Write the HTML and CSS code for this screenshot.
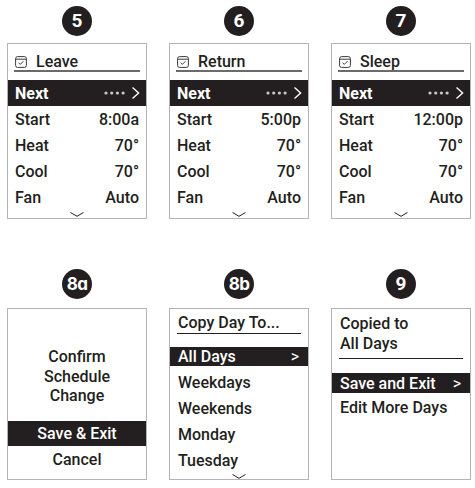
FILE: index.html
```html
<!DOCTYPE html>
<html>
<head>
<meta charset="utf-8">
<link rel="stylesheet" href="styles.css">
</head>
<body>
<div class="sheet">

  <div class="cell">
    <div class="badge">5</div>
    <div class="screen tall">
      <div class="head"><svg class="cal" viewBox="0 0 12 12"><rect x="0.6" y="0.6" width="10.8" height="10.8" rx="2"/><line x1="0.6" y1="3.2" x2="11.4" y2="3.2"/><polyline points="3.6,6.8 5.3,8.4 8.4,5.2"/></svg><span>Leave</span></div>
      <div class="row sel"><span class="lbl">Next</span><svg class="more" viewBox="0 0 36 12"><circle cx="2" cy="6" r="1.6"/><circle cx="7.7" cy="6" r="1.6"/><circle cx="13.4" cy="6" r="1.6"/><circle cx="19.1" cy="6" r="1.6"/><polyline points="28.5,0.6 34.6,6 28.5,11.4"/></svg></div>
      <div class="row"><span>Start</span><span>8:00a</span></div>
      <div class="row"><span>Heat</span><span>70°</span></div>
      <div class="row"><span>Cool</span><span>70°</span></div>
      <div class="row"><span>Fan</span><span>Auto</span></div>
      <svg class="down" viewBox="0 0 14 5"><polyline points="0.5,0.5 7,4.3 13.5,0.5"/></svg>
    </div>
  </div>

  <div class="cell">
    <div class="badge">6</div>
    <div class="screen tall">
      <div class="head"><svg class="cal" viewBox="0 0 12 12"><rect x="0.6" y="0.6" width="10.8" height="10.8" rx="2"/><line x1="0.6" y1="3.2" x2="11.4" y2="3.2"/><polyline points="3.6,6.8 5.3,8.4 8.4,5.2"/></svg><span>Return</span></div>
      <div class="row sel"><span class="lbl">Next</span><svg class="more" viewBox="0 0 36 12"><circle cx="2" cy="6" r="1.6"/><circle cx="7.7" cy="6" r="1.6"/><circle cx="13.4" cy="6" r="1.6"/><circle cx="19.1" cy="6" r="1.6"/><polyline points="28.5,0.6 34.6,6 28.5,11.4"/></svg></div>
      <div class="row"><span>Start</span><span>5:00p</span></div>
      <div class="row"><span>Heat</span><span>70°</span></div>
      <div class="row"><span>Cool</span><span>70°</span></div>
      <div class="row"><span>Fan</span><span>Auto</span></div>
      <svg class="down" viewBox="0 0 14 5"><polyline points="0.5,0.5 7,4.3 13.5,0.5"/></svg>
    </div>
  </div>

  <div class="cell">
    <div class="badge">7</div>
    <div class="screen tall">
      <div class="head"><svg class="cal" viewBox="0 0 12 12"><rect x="0.6" y="0.6" width="10.8" height="10.8" rx="2"/><line x1="0.6" y1="3.2" x2="11.4" y2="3.2"/><polyline points="3.6,6.8 5.3,8.4 8.4,5.2"/></svg><span>Sleep</span></div>
      <div class="row sel"><span class="lbl">Next</span><svg class="more" viewBox="0 0 36 12"><circle cx="2" cy="6" r="1.6"/><circle cx="7.7" cy="6" r="1.6"/><circle cx="13.4" cy="6" r="1.6"/><circle cx="19.1" cy="6" r="1.6"/><polyline points="28.5,0.6 34.6,6 28.5,11.4"/></svg></div>
      <div class="row"><span>Start</span><span>12:00p</span></div>
      <div class="row"><span>Heat</span><span>70°</span></div>
      <div class="row"><span>Cool</span><span>70°</span></div>
      <div class="row"><span>Fan</span><span>Auto</span></div>
      <svg class="down" viewBox="0 0 14 5"><polyline points="0.5,0.5 7,4.3 13.5,0.5"/></svg>
    </div>
  </div>

  <div class="cell low">
    <div class="badge round">8a</div>
    <div class="screen short confirm">
      <div class="msg">Confirm<br>Schedule<br>Change</div>
      <div class="center-row sel">Save &amp; Exit</div>
      <div class="center-row last">Cancel</div>
    </div>
  </div>

  <div class="cell low">
    <div class="badge round">8b</div>
    <div class="screen short">
      <div class="title">Copy Day To...</div>
      <div class="item sel"><span>All Days</span><span class="gt">&gt;</span></div>
      <div class="item"><span>Weekdays</span></div>
      <div class="item"><span>Weekends</span></div>
      <div class="item"><span>Monday</span></div>
      <div class="item"><span>Tuesday</span></div>
      <svg class="down low" viewBox="0 0 14 5"><polyline points="0.5,0.5 7,4.3 13.5,0.5"/></svg>
    </div>
  </div>

  <div class="cell low">
    <div class="badge">9</div>
    <div class="screen short">
      <div class="title two">Copied to<br>All Days</div>
      <div class="item sel tight"><span>Save and Exit</span><span class="gt">&gt;</span></div>
      <div class="item"><span>Edit More Days</span></div>
    </div>
  </div>

</div>
</body>
</html>
```

FILE: styles.css
```css
* { box-sizing: border-box; }

html, body {
  margin: 0;
  background: #fff;
}

body {
  font-family: Roboto, "Liberation Sans", sans-serif;
  color: #231f20;
}

.sheet {
  display: grid;
  grid-template-columns: repeat(3, 140px);
  column-gap: 22px;
  row-gap: 50px;
  padding: 6px 0 0 7px;
}

.cell {
  display: flex;
  flex-direction: column;
  align-items: center;
}

.badge {
  width: 30px;
  height: 30px;
  border-radius: 50%;
  background: #231f20;
  color: #fff;
  font-weight: 700;
  font-size: 19px;
  line-height: 30px;
  text-align: center;
  margin-bottom: 7px;
}

.cell.low .badge { margin-bottom: 9px; }

.badge.round {
  font-family: Inter, Roboto, sans-serif;
  font-feature-settings: "cv11" 1, "ss02" 0;
  font-size: 17px;
  letter-spacing: -0.6px;
}

.screen {
  width: 140px;
  border: 1px solid #b4b4b4;
  display: flex;
  flex-direction: column;
  font-size: 16px;
  font-weight: 500;
}

.screen.tall { height: 176px; }
.screen.short { height: 172px; }

.head {
  margin: 0 6px;
  height: 28px;
  border-bottom: 2px solid #6b6b6b;
  display: flex;
  align-items: flex-end;
  gap: 9px;
  padding: 0 0 0 1px;
  line-height: 17px;
}

.cal {
  width: 12px;
  height: 12px;
  margin-bottom: 2px;
  fill: none;
  stroke: #3a3a3a;
  stroke-width: 1;
}

.row {
  height: 26px;
  display: flex;
  align-items: center;
  justify-content: space-between;
  padding: 0 7px 0 7px;
}

.row.sel {
  margin-top: 8px;
  background: #231f20;
  color: #fff;
  font-weight: 700;
}

.more {
  width: 36px;
  height: 12px;
  margin-right: -1px;
}

.more circle { fill: #c9c9c9; }
.more polyline {
  fill: none;
  stroke: #fff;
  stroke-width: 1.4;
}

.down {
  width: 14px;
  height: 5px;
  align-self: center;
  margin-top: 2px;
  fill: none;
  stroke: #231f20;
  stroke-width: 1;
}

.down.low { margin-top: 1px; }

.confirm { align-items: stretch; }

.msg {
  margin-top: 38px;
  text-align: center;
  line-height: 19.5px;
}

.center-row {
  height: 25px;
  line-height: 25px;
  text-align: center;
}

.center-row.sel {
  margin-top: 15px;
  background: #231f20;
  color: #fff;
}

.center-row.last {
  height: 28px;
  line-height: 28px;
}

.title {
  margin: 0 7px;
  padding: 4px 0 0 1px;
  line-height: 20px;
  border-bottom: 1.5px solid #231f20;
}

.title.two { padding-top: 5px; padding-bottom: 4px; }

.item {
  height: 26px;
  display: flex;
  align-items: center;
  justify-content: space-between;
  padding: 0 8px;
}

.item.sel {
  margin-top: 12.5px;
  margin-bottom: 3px;
  height: 20px;
  background: #231f20;
  color: #fff;
  padding-right: 9px;
}

.item.sel.tight {
  margin-top: 14px;
  margin-bottom: 1px;
}

.gt { font-weight: 400; }
```
